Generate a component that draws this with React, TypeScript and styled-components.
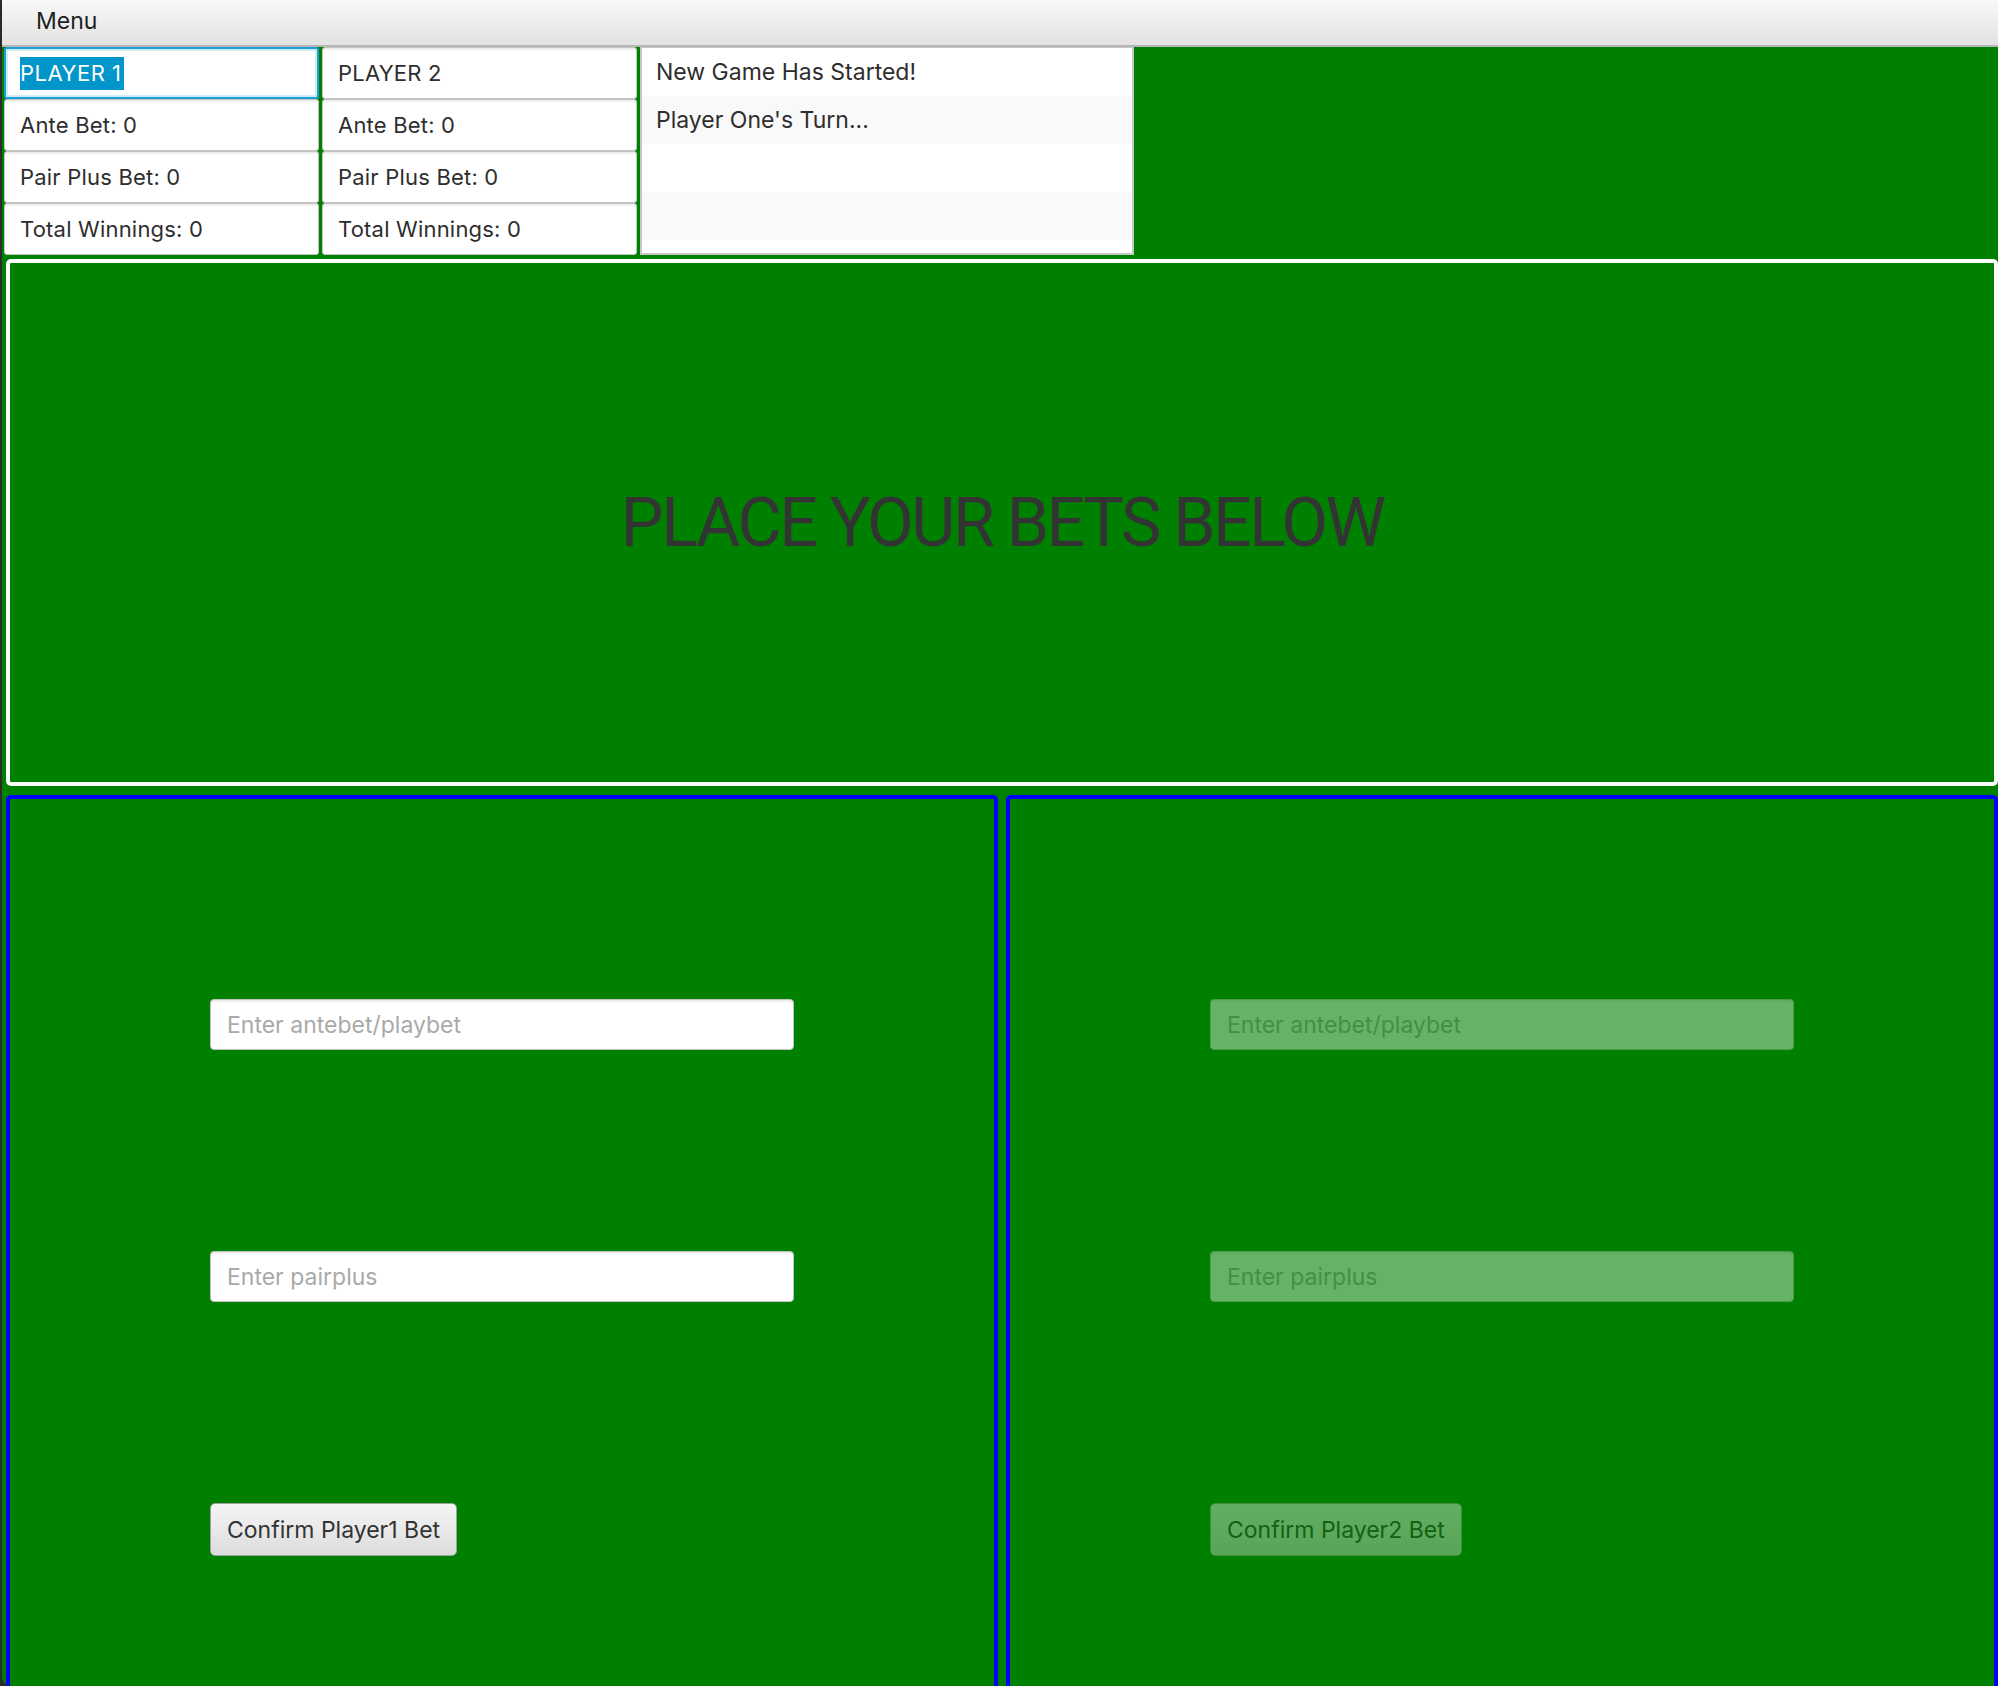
import React from "react";
import styled, { createGlobalStyle, css } from "styled-components";

const GlobalStyle = createGlobalStyle`
  html, body {
    margin: 0;
    padding: 0;
    background: #2b2b2b;
  }
  body {
    font-family: Inter, "Noto Sans", "Liberation Sans", sans-serif;
  }
  #root {
    height: 100vh;
  }
`;

const Window = styled.div`
  height: 100vh;
  display: flex;
  flex-direction: column;
  background: #008000;
  border-left: 2px solid #2b2b2b;
  border-bottom-left-radius: 10px;
  overflow: hidden;
  box-sizing: border-box;
`;

const MenuBar = styled.div`
  height: 47px;
  flex: none;
  box-sizing: border-box;
  display: flex;
  align-items: center;
  padding: 0 0 4px 34px;
  background: linear-gradient(#f9f9f9, #e2e2e2);
  border-bottom: 2px solid #b6b6b6;
  font-size: 23px;
  color: #1e1e1e;
`;

const InfoGrid = styled.div`
  flex: none;
  display: grid;
  grid-template-columns: 315px 315px 494px;
  grid-template-rows: repeat(4, 52px);
  column-gap: 3px;
  padding: 0 0 0 2px;
`;

const Cell = styled.div<{ $focused?: boolean }>`
  display: flex;
  align-items: center;
  box-sizing: border-box;
  padding-left: 15px;
  background: #fff;
  border: 1px solid #c4c4c4;
  border-radius: 3px;
  box-shadow: inset 0 3px 3px -2px rgba(0, 0, 0, 0.12);
  font-size: 22px;
  letter-spacing: 0.2px;
  color: #2e2e2e;
  white-space: nowrap;

  ${(p) =>
    p.$focused &&
    css`
      border: 2px solid #1a9fd6;
      padding-left: 14px;
      box-shadow: inset 0 0 0 2px #d4ecf7;
    `}
`;

const Selected = styled.span`
  display: inline-block;
  line-height: 33px;
  padding-right: 2px;
  background: #0096c9;
  color: #fff;
  letter-spacing: 0.5px;
`;

const LogList = styled.div`
  grid-column: 3;
  grid-row: 1 / 5;
  box-sizing: border-box;
  background: #fff;
  border: 2px solid #c6c6c6;
  border-top-width: 1px;
  overflow: hidden;
`;

const LogRow = styled.div<{ $odd: boolean }>`
  height: 48px;
  display: flex;
  align-items: center;
  padding-left: 14px;
  background: ${(p) => (p.$odd ? "#f9f9f9" : "#fff")};
  font-size: 23px;
  color: #2e2e2e;
`;

const Banner = styled.div`
  flex: none;
  height: 527px;
  margin: 4px 0 0 4px;
  box-sizing: border-box;
  border: 4px solid #fff;
  border-radius: 5px;
  display: flex;
  align-items: center;
  justify-content: center;
  font-family: Roboto, Inter, sans-serif;
  font-size: 68px;
  color: #333;
  letter-spacing: -2.5px;
`;

const BetArea = styled.div`
  flex: 1;
  display: grid;
  grid-template-columns: 1fr 1fr;
  column-gap: 8px;
  margin: 9px 0 0 4px;
  min-height: 0;
`;

const BetPanel = styled.div<{ $disabled?: boolean }>`
  box-sizing: border-box;
  border: 4px solid #0000ff;
  border-bottom: none;
  border-radius: 5px 5px 0 0;
  padding: 200px 0 0 200px;
  display: flex;
  flex-direction: column;
  align-items: flex-start;
  gap: 201px;

  & > * {
    opacity: ${(p) => (p.$disabled ? 0.4 : 1)};
  }
`;

const BetInput = styled.input`
  width: 584px;
  height: 51px;
  box-sizing: border-box;
  padding: 0 16px;
  margin: 0;
  background: #fff;
  border: 1px solid #c2c2c2;
  border-radius: 4px;
  box-shadow: inset 0 3px 3px -2px rgba(0, 0, 0, 0.12);
  font-family: inherit;
  font-size: 23px;
  color: #2e2e2e;
  outline: none;

  &::placeholder {
    color: #a9a9a9;
  }
  &:disabled {
    background: #fff;
  }
`;

const ConfirmButton = styled.button`
  height: 53px;
  box-sizing: border-box;
  padding: 0 16px;
  margin: 0;
  background: linear-gradient(#f5f5f5, #dcdcdc);
  border: 1px solid #a0a0a0;
  border-radius: 5px;
  font-family: inherit;
  font-size: 23px;
  color: #333;
  cursor: pointer;

  &:disabled {
    color: #333;
    cursor: default;
  }
`;

const players = [
  { name: "PLAYER 1", focused: true },
  { name: "PLAYER 2", focused: false },
];

const stats = ["Ante Bet: 0", "Pair Plus Bet: 0", "Total Winnings: 0"];

const log = ["New Game Has Started!", "Player One's Turn...", "", ""];

export default function App() {
  return (
    <>
      <GlobalStyle />
      <Window>
        <MenuBar>Menu</MenuBar>
        <InfoGrid>
          {players.map((p, col) => (
            <React.Fragment key={p.name}>
              <Cell $focused={p.focused} style={{ gridColumn: col + 1, gridRow: 1 }}>
                {p.focused ? <Selected>{p.name}</Selected> : p.name}
              </Cell>
              {stats.map((s, i) => (
                <Cell key={s} style={{ gridColumn: col + 1, gridRow: i + 2 }}>
                  {s}
                </Cell>
              ))}
            </React.Fragment>
          ))}
          <LogList>
            {log.map((line, i) => (
              <LogRow key={i} $odd={i % 2 === 1}>
                {line}
              </LogRow>
            ))}
          </LogList>
        </InfoGrid>
        <Banner>PLACE YOUR BETS BELOW</Banner>
        <BetArea>
          {[1, 2].map((n) => (
            <BetPanel key={n} $disabled={n === 2}>
              <BetInput placeholder="Enter antebet/playbet" disabled={n === 2} />
              <BetInput placeholder="Enter pairplus" disabled={n === 2} />
              <ConfirmButton disabled={n === 2}>Confirm Player{n} Bet</ConfirmButton>
            </BetPanel>
          ))}
        </BetArea>
      </Window>
    </>
  );
}
